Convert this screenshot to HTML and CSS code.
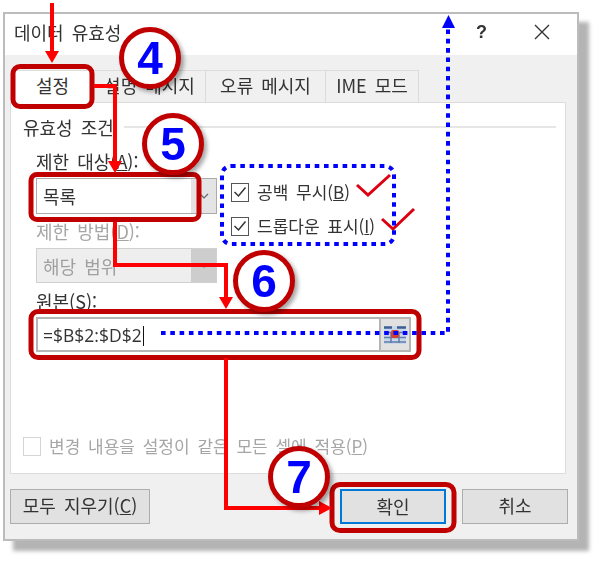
FILE: index.html
```html
<!DOCTYPE html>
<html lang="ko">
<head>
    <meta charset="UTF-8">
    <title>데이터 유효성</title>
    <link rel="stylesheet" href="styles.css">
</head>
<body>

    <div class="dialog">
        <div class="titlebar">
            <span class="title">데이터 유효성</span>
            <span class="help">?</span>
            <svg class="close" width="16" height="16" viewBox="0 0 16 16"><path d="M1 1L15 15M15 1L1 15" stroke="#333" stroke-width="1.4" fill="none"/></svg>
        </div>

        <div class="content">
            <div class="tabs">
                <div class="tab tab-active">설정</div>
                <div class="tab tab-msg">설명 메시지</div>
                <div class="tab tab-err">오류 메시지</div>
                <div class="tab tab-ime">IME 모드</div>
            </div>

            <div class="panel">
                <div class="group-head">
                    <span>유효성 조건</span>
                    <div class="group-line"></div>
                </div>

                <div class="condition">
                    <div class="fields">
                        <div class="label">제한 대상(<u>A</u>):</div>
                        <div class="select select-list">
                            <span class="select-value">목록</span>
                            <span class="select-btn">
                                <svg width="10" height="6" viewBox="0 0 10 6"><path d="M1 1L5 5L9 1" stroke="#666" stroke-width="1.2" fill="none"/></svg>
                            </span>
                        </div>
                        <div class="label label-off label-method">제한 방법(<u>D</u>):</div>
                        <div class="select select-off">
                            <span class="select-value">해당 범위</span>
                            <span class="select-btn">
                                <svg width="10" height="6" viewBox="0 0 10 6"><path d="M1 1L5 5L9 1" stroke="#aaa" stroke-width="1.2" fill="none"/></svg>
                            </span>
                        </div>
                    </div>
                    <div class="checks">
                        <label class="check">
                            <span class="box">
                                <svg width="14" height="12" viewBox="0 0 14 12"><path d="M1.500 6L5.500 10L12.500 1.500" stroke="#333" stroke-width="1.5" fill="none"/></svg>
                            </span>
                            <span>공백 무시(<u>B</u>)</span>
                        </label>
                        <label class="check">
                            <span class="box">
                                <svg width="14" height="12" viewBox="0 0 14 12"><path d="M1.500 6L5.500 10L12.500 1.500" stroke="#333" stroke-width="1.5" fill="none"/></svg>
                            </span>
                            <span>드롭다운 표시(<u>I</u>)</span>
                        </label>
                    </div>
                </div>

                <div class="label label-source">원본(<u>S</u>):</div>
                <div class="source">
                    <span class="source-value">=$B$2:$D$2</span>
                    <span class="range-btn">
                        <svg width="24" height="20" viewBox="0 0 24 20">
                            <rect x="1" y="1" width="22" height="18" fill="#c9d6e8"/>
                            <path d="M1 2.500H9M14 2.500H23" stroke="#3f5f92" stroke-width="2.500" fill="none"/>
                            <path d="M1 7.500H8M16 7.500H23M1 12.500H23M1 17H23M8 7V18M16 7V18" stroke="#5f7dab" stroke-width="1.5" fill="none"/>
                            <rect x="8" y="5" width="8" height="8" rx="2" fill="#d8412f"/>
                        </svg>
                    </span>
                </div>

                <label class="check check-off">
                    <span class="box"></span>
                    <span>변경 내용을 설정이 같은 모든 셀에 적용(<u>P</u>)</span>
                </label>
            </div>

            <div class="footer">
                <div class="btn btn-clear">모두 지우기(<u>C</u>)</div>
                <div class="btn btn-ok">확인</div>
                <div class="btn">취소</div>
            </div>
        </div>
    </div>

    <!-- annotations over the dialog -->
    <svg class="marks" width="600" height="564" viewBox="0 0 600 564">
        <g fill="none" stroke="#c00000" stroke-width="5">
            <rect x="13" y="66.5" width="79" height="40" rx="7"/>
            <rect x="31" y="174.5" width="168" height="45" rx="6"/>
            <rect x="31" y="311.5" width="388" height="46" rx="7"/>
            <rect x="332" y="484.5" width="122" height="46" rx="8"/>
        </g>

        <g fill="none" stroke="#ff0000" stroke-width="4">
            <path d="M52 3V53"/>
            <path d="M94 86H115V162"/>
            <path d="M115 222V265H226V298"/>
            <path d="M226 358V508H320"/>
        </g>
        <g fill="#ff0000">
            <path d="M45 51H59L52 63Z"/>
            <path d="M108 161H122L115 173Z"/>
            <path d="M219 297H233L226 309Z"/>
            <path d="M319 501V515L332 508Z"/>
        </g>

        <g fill="none" stroke="#dd0011" stroke-width="3">
            <path d="M357 185L368 195L390 175"/>
            <path d="M382 219L393 229L414 209"/>
        </g>

        <g fill="none" stroke="#0000ff" stroke-width="4" stroke-dasharray="4.6 4.7">
            <rect x="222" y="166" width="172" height="78" rx="9"/>
            <path d="M161 333H448V28"/>
        </g>
        <path d="M442 28H455L448.500 15Z" fill="#0000ff"/>
    </svg>

    <div class="badge badge-4">4</div>
    <div class="badge badge-5">5</div>
    <div class="badge badge-6">6</div>
    <div class="badge badge-7">7</div>

</body>
</html>
```

FILE: styles.css
```css
* {
    margin: 0;
    padding: 0;
    box-sizing: border-box;
}

body {
    position: relative;
    width: 600px;
    height: 564px;
    overflow: hidden;
    background-color: #fff;
    font-family: "Noto Sans CJK KR", "Noto Sans", sans-serif;
    font-size: 18px;
    line-height: 24px;
    word-spacing: 3px;
    color: #333;
}

.dialog {
    width: 576px;
    height: 529px;
    margin: 12px 0 0 3px;
    border: 2px solid #bcbcbc;
    box-shadow: 10px 10px 4px #b4b4b4;
    background-color: #f0f0f0;
    filter: blur(0.55px);
}

.titlebar {
    display: flex;
    align-items: center;
    height: 41px;
    padding: 0 0 5px 9px;
    background-color: #fff;
}

.title {
    width: 462px;
}

.help {
    width: 58px;
    font-family: "Liberation Sans", sans-serif;
    font-weight: bold;
}

.content {
    padding: 15px 0 0 5px;
}

.tabs {
    display: flex;
    height: 32px;
    padding-left: 2px;
}

.tab {
    height: 33px;
    border: 1px solid #dcdcdc;
    border-bottom: none;
    line-height: 28px;
    text-align: center;
    white-space: nowrap;
}

.tab-active {
    position: relative;
    z-index: 1;
    width: 81px;
    background-color: #fff;
}

.tab-msg {
    width: 113px;
}

.tab-err {
    width: 120px;
    border-left: none;
}

.tab-ime {
    width: 93px;
    border-left: none;
}

.panel {
    width: 556px;
    height: 372px;
    border: 1px solid #dcdcdc;
    background-color: #fff;
}

.group-head {
    display: flex;
    align-items: center;
    margin: 12px 9px 0 12px;
}

.group-line {
    flex: 1;
    height: 2px;
    margin-left: 10px;
    background-color: #e6e6e6;
}

.condition {
    display: flex;
    margin: 10px 0 0 25px;
}

.fields {
    width: 181px;
}

.label {
    white-space: nowrap;
}

.label-off {
    color: #a6a6a6;
}

.label-method {
    margin-top: 5px;
}

.select {
    display: flex;
    justify-content: space-between;
    align-items: center;
    margin-top: 5px;
    border: 1px solid #ababab;
}

.select-list {
    height: 36px;
    background-color: #fff;
}

.select-off {
    height: 35px;
    border-color: #d0d0d0;
    background-color: #eee;
    color: #a0a0a0;
}

.select-value {
    padding-left: 6px;
    white-space: nowrap;
}

.select-btn {
    display: flex;
    justify-content: center;
    align-items: center;
    width: 25px;
    height: 100%;
    background-color: #e4e4e4;
}

.select-off .select-btn {
    background-color: #cdcdcd;
}

.checks {
    display: flex;
    flex-direction: column;
    gap: 10px;
    margin: 31px 0 0 14px;
}

.check {
    display: flex;
    align-items: center;
    gap: 8px;
    font-size: 17px;
    white-space: nowrap;
}

.box {
    display: flex;
    justify-content: center;
    align-items: center;
    width: 18px;
    height: 19px;
    border: 1.5px solid #555;
    background-color: #fff;
}

.label-source {
    margin: 6px 0 0 25px;
}

.source {
    display: flex;
    justify-content: space-between;
    align-items: center;
    width: 375px;
    height: 35px;
    margin: 4px 0 0 25px;
    border: 2px solid #b5b5b5;
}

.source-value {
    padding-left: 5px;
    font-family: "Open Sans", sans-serif;
    font-size: 17.5px;
}

.source-value::after {
    content: "";
    display: inline-block;
    width: 1px;
    height: 20px;
    margin-left: 1px;
    vertical-align: -4px;
    background-color: #111;
}

.range-btn {
    display: flex;
    justify-content: center;
    align-items: center;
    width: 30px;
    height: 100%;
    border-left: 2px solid #b5b5b5;
    background-color: #e1e1e1;
}

.check-off {
    margin: 82px 0 0 12px;
    color: #a6a6a6;
}

.check-off .box {
    border-color: #d4d4d4;
}

.footer {
    display: flex;
    gap: 16px;
    margin-top: 15px;
    padding-right: 9px;
}

.btn {
    width: 106px;
    height: 35px;
    border: 1.5px solid #adadad;
    background-color: #e1e1e1;
    line-height: 30px;
    text-align: center;
    white-space: nowrap;
}

.btn-clear {
    width: 140px;
    margin-right: auto;
}

.btn-ok {
    border: 2px solid #0078d7;
}

.marks {
    position: absolute;
    left: 0;
    top: 0;
}

.badge {
    position: absolute;
    width: 62px;
    height: 62px;
    border: 5px solid #c00000;
    border-radius: 50%;
    box-shadow: 3px 3px 4px rgba(0, 0, 0, 0.35);
    background-color: #fff;
    font-family: "Liberation Sans", sans-serif;
    font-size: 46px;
    font-weight: bold;
    line-height: 52px;
    text-align: center;
    color: #0000ff;
}

.badge-4 {
    left: 119px;
    top: 27px;
}

.badge-5 {
    left: 142px;
    top: 113px;
}

.badge-6 {
    left: 233px;
    top: 250px;
}

.badge-7 {
    left: 268px;
    top: 446px;
}
```
